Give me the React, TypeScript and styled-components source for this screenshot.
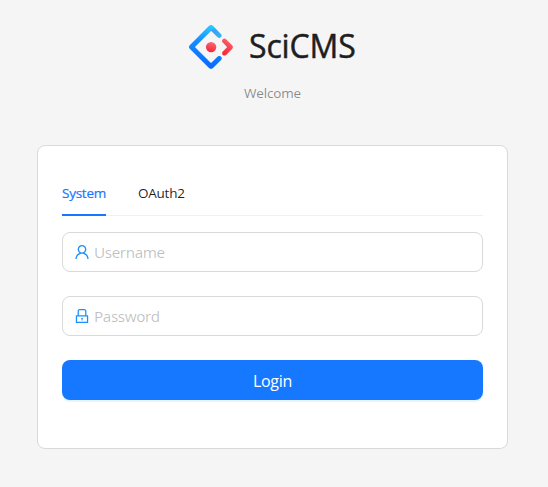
import React from "react";
import styled, { createGlobalStyle } from "styled-components";

const GlobalStyle = createGlobalStyle`
  * { box-sizing: border-box; }
  body {
    margin: 0;
    background: #f5f5f5;
    font-family: "Open Sans", "Noto Sans", sans-serif;
    font-size: 14px;
    color: rgba(0, 0, 0, 0.88);
  }
`;

const Page = styled.main`
  display: flex;
  flex-direction: column;
  height: 487px;
  padding: 25px 40px 0 37px;
  overflow: hidden;
`;

const Header = styled.header`
  display: flex;
  flex-direction: column;
  align-items: center;
  height: 120px;
`;

const Brand = styled.div`
  display: flex;
  align-items: center;
  gap: 16px;
  height: 44px;
`;

const Logo = styled.svg`
  display: block;
  width: 44px;
  height: 44px;
`;

const Title = styled.h1`
  margin: 0 0 2px;
  width: 107px;
  font-size: 32px;
  line-height: 42px;
  font-weight: 400;
  letter-spacing: -0.15px;
  -webkit-text-stroke: 0.5px #1e1e1e;
  white-space: nowrap;
`;

const Subtitle = styled.p`
  margin: 13px 0 0;
  line-height: 22px;
  font-size: 13.5px;
  font-weight: 400;
  letter-spacing: -0.15px;
  color: rgba(0, 0, 0, 0.45);
`;

const Card = styled.section`
  height: 304px;
  padding: 24px;
  background: #fff;
  border: 1px solid #d9d9d9;
  border-radius: 8px;
`;

const Tabs = styled.nav`
  display: flex;
  gap: 32px;
  height: 46px;
  margin-bottom: 16px;
  border-bottom: 1px solid #f0f0f0;
`;

const Tab = styled.button<{ $active?: boolean; $width: number }>`
  width: ${(p) => p.$width}px;
  height: 46px;
  padding: 2px 0 0;
  border: 0;
  border-bottom: 2px solid ${(p) => (p.$active ? "#1677ff" : "transparent")};
  background: none;
  color: ${(p) => (p.$active ? "#1677ff" : "rgba(0, 0, 0, 0.88)")};
  font: 400 13.5px/22px "Open Sans", sans-serif;
  letter-spacing: -0.25px;
  -webkit-text-stroke: ${(p) => (p.$active ? "0.2px #1677ff" : "0")};
  text-align: left;
  white-space: nowrap;
`;

const Field = styled.label`
  display: flex;
  align-items: center;
  gap: 3px;
  height: 40px;
  margin-bottom: 24px;
  padding: 0 10px;
  border: 1px solid #d9d9d9;
  border-radius: 8px;
`;

const FieldIcon = styled.svg`
  flex: none;
  width: 18px;
  height: 18px;
  fill: #1890ff;
`;

const Input = styled.input`
  flex: 1;
  min-width: 0;
  padding: 0;
  border: 0;
  outline: 0;
  background: none;
  font: 400 15.3px/24px "Open Sans", sans-serif;
  letter-spacing: -0.4px;

  &::placeholder {
    color: rgba(0, 0, 0, 0.25);
    opacity: 1;
  }
`;

const Submit = styled.button`
  display: block;
  width: 100%;
  height: 40px;
  padding: 2px 0 0;
  border: 0;
  border-radius: 8px;
  background: #1677ff;
  box-shadow: 0 2px 0 rgba(5, 145, 255, 0.1);
  color: #fff;
  font: 400 16px/24px "Open Sans", sans-serif;
  letter-spacing: -0.3px;
`;

const USER =
  "M858.5 763.6a374 374 0 00-80.6-119.5 375.63 375.63 0 00-119.5-80.6c-.4-.2-.8-.3-1.2-.5C719.5 518 760 444.7 760 362c0-137-111-248-248-248S264 225 264 362c0 82.7 40.5 156 102.8 201.1-.4.2-.8.3-1.2.5-44.8 18.9-85 46-119.5 80.6a375.63 375.63 0 00-80.6 119.5A371.7 371.7 0 00136 901.8a8 8 0 008 8.2h60c4.4 0 7.9-3.5 8-7.8 2-77.2 33-149.5 87.8-204.3 56.7-56.7 132-87.9 212.2-87.9s155.5 31.2 212.2 87.9C779 752.7 810 825 812 902.2c.1 4.4 3.6 7.8 8 7.8h60a8 8 0 008-8.2c-1-47.8-10.9-94.3-29.5-138.2zM512 534c-45.9 0-89.1-17.9-121.6-50.4S340 407.9 340 362c0-45.9 17.9-89.1 50.4-121.6S466.1 190 512 190s89.1 17.9 121.6 50.4S684 316.1 684 362c0 45.9-17.9 89.1-50.4 121.6S557.9 534 512 534z";
const LOCK =
  "M832 464h-68V240c0-70.7-57.3-128-128-128H388c-70.7 0-128 57.3-128 128v224h-68c-17.7 0-32 14.3-32 32v384c0 17.7 14.3 32 32 32h640c17.7 0 32-14.3 32-32V496c0-17.7-14.3-32-32-32zM332 240c0-30.9 25.1-56 56-56h248c30.9 0 56 25.1 56 56v224H332V240zm460 600H232V536h560v304zM484 701v53c0 4.4 3.6 8 8 8h40c4.4 0 8-3.6 8-8v-53a48.03 48.03 0 10-56 0z";

function BrandMark() {
  return (
    <Logo viewBox="0 0 200 200" aria-hidden="true">
      <defs>
        <linearGradient id="blueEdge" x1="62%" y1="0%" x2="100%" y2="50%">
          <stop offset="0" stopColor="#4291f0" />
          <stop offset="1" stopColor="#2ec7ff" />
        </linearGradient>
        <linearGradient id="blue" x1="70%" y1="0%" x2="54%" y2="109%">
          <stop offset="0" stopColor="#29cdff" />
          <stop offset="0.38" stopColor="#148eff" />
          <stop offset="1" stopColor="#0a60ff" />
        </linearGradient>
        <linearGradient id="red" x1="70%" y1="-13%" x2="17%" y2="115%">
          <stop offset="0" stopColor="#fa816e" />
          <stop offset="0.41" stopColor="#f74a5c" />
          <stop offset="1" stopColor="#f51d2c" />
        </linearGradient>
        <linearGradient id="dot" x1="68%" y1="-36%" x2="30%" y2="115%">
          <stop offset="0" stopColor="#fa8e7d" />
          <stop offset="0.51" stopColor="#f74a5c" />
          <stop offset="1" stopColor="#f51d2c" />
        </linearGradient>
      </defs>
      <path
        fill="url(#blueEdge)"
        d="M91.588 4.177L4.18 91.513C-.519 96.208-.519 103.792 4.18 108.487L91.588 195.823C96.287 200.519 103.877 200.519 108.577 195.823L145.225 159.205C149.434 155 149.434 148.182 145.225 143.977C141.017 139.772 134.194 139.772 129.985 143.977L102.202 171.737C101.032 172.906 99.257 172.906 98.088 171.737L28.286 101.993C27.116 100.824 27.116 99.051 28.286 97.882L98.088 28.138C99.257 26.969 101.032 26.969 102.202 28.138L129.985 55.898C134.194 60.103 141.017 60.103 145.225 55.898C149.434 51.693 149.434 44.876 145.225 40.671L108.581 4.056C103.862-.538 96.269-.501 91.588 4.177Z"
      />
      <path
        fill="url(#blue)"
        d="M91.588 4.177L4.18 91.513C-.519 96.208-.519 103.792 4.18 108.487L91.588 195.823C96.287 200.519 103.877 200.519 108.577 195.823L145.225 159.205C149.434 155 149.434 148.182 145.225 143.977C141.017 139.772 134.194 139.772 129.985 143.977L102.202 171.737C101.032 172.906 99.257 172.906 98.088 171.737L28.286 101.993C27.116 100.824 27.116 99.051 28.286 97.882L98.088 28.138C101 25.627 105.752 20.542 112.73 19.352C117.916 18.469 123.585 20.414 129.739 25.189C125.625 21.078 118.572 14.034 108.581 4.056C103.862-.538 96.269-.501 91.588 4.177Z"
      />
      <path
        fill="url(#red)"
        d="M153.686 135.855C157.894 140.06 164.717 140.06 168.926 135.855L195.96 108.843C200.659 104.147 200.659 96.564 195.961 91.869L168.691 64.718C164.472 60.518 157.647 60.524 153.436 64.732C149.227 68.937 149.227 75.754 153.436 79.959L171.854 98.362C173.024 99.531 173.024 101.305 171.854 102.473L153.686 120.627C149.477 124.832 149.477 131.65 153.686 135.855Z"
      />
      <ellipse fill="url(#dot)" cx="100.52" cy="100.44" rx="23.6" ry="23.58" />
    </Logo>
  );
}

export default function App() {
  return (
    <>
      <GlobalStyle />
      <Page>
        <Header>
          <Brand>
            <BrandMark />
            <Title>SciCMS</Title>
          </Brand>
          <Subtitle>Welcome</Subtitle>
        </Header>
        <Card>
          <Tabs>
            <Tab $active $width={44}>System</Tab>
            <Tab $width={48}>OAuth2</Tab>
          </Tabs>
          <Field>
            <FieldIcon viewBox="0 0 1024 1024" aria-hidden="true"><path d={USER} /></FieldIcon>
            <Input placeholder="Username" />
          </Field>
          <Field>
            <FieldIcon viewBox="0 0 1024 1024" aria-hidden="true"><path d={LOCK} /></FieldIcon>
            <Input type="password" placeholder="Password" />
          </Field>
          <Submit type="button">Login</Submit>
        </Card>
      </Page>
    </>
  );
}
